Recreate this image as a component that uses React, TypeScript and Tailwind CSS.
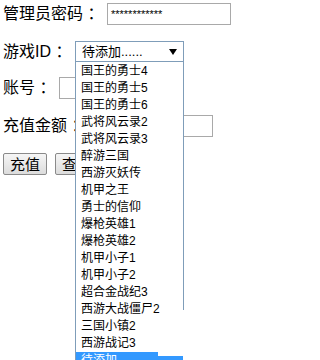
import React from "react";

const games = [
  "国王的勇士4",
  "国王的勇士5",
  "国王的勇士6",
  "武将风云录2",
  "武将风云录3",
  "醉游三国",
  "西游灭妖传",
  "机甲之王",
  "勇士的信仰",
  "爆枪英雄1",
  "爆枪英雄2",
  "机甲小子1",
  "机甲小子2",
  "超合金战纪3",
  "西游大战僵尸2",
  "三国小镇2",
  "西游战记3",
];

const font = { fontFamily: '"Liberation Sans", "Noto Sans CJK SC", sans-serif' };

const Label: React.FC<{ text: string; className?: string }> = ({ text, className = "" }) => (
  <span className={`shrink-0 whitespace-pre text-base leading-none ${className}`}>{text}</span>
);

const Input: React.FC<{ className?: string; value?: string }> = ({ className = "", value }) => (
  <div className={`shrink-0 h-[22px] border border-[#a9a9a9] bg-white flex items-center pl-[3px] ${className}`}>
    {value && <span className="text-[11px] leading-none text-black">{value}</span>}
  </div>
);

const Button: React.FC<{ label: string }> = ({ label }) => (
  <div className="h-[22px] px-[6px] border border-[#8a8a8a] rounded-[2px] bg-gradient-to-b from-[#f6f6f6] to-[#dcdcdc] flex items-center text-[15px] leading-none text-black">
    {label}
  </div>
);

export default function App() {
  return (
    <div className="relative w-[278px] h-[360px] overflow-hidden bg-white text-black" style={font}>
      <div className="pl-[3px]">
        <div className="mt-[3px] h-[22px] flex items-center">
          <Label text="管理员密码 ：" className="w-[104px]" />
          <Input className="w-[124px]" value="************" />
        </div>

        <div className="mt-[16px] h-[21px] flex items-center">
          <Label text="游戏ID ：" className="w-[72px]" />
          <div className="relative shrink-0 w-[109px] h-[21px] border border-[#7f9db9] bg-white flex items-center justify-between pl-[6px] pr-[6px]">
            <span className="text-[13px] leading-none">待添加......</span>
            <svg width="8" height="6" viewBox="0 0 8 6">
              <path d="M0 0H8L4 6Z" fill="#000" />
            </svg>
            <div className="absolute left-[-1px] top-[20px] w-[109px] h-[300px] bg-white border-l border-[#7f9db9]">
              <div className="absolute right-0 top-0 h-[248px] border-r border-[#7f9db9]" />
              <div className="pt-[1px]">
                {games.map((g) => (
                  <div key={g} className="h-[17px] pl-[5px] text-[12px] leading-[17px] whitespace-nowrap">
                    {g}
                  </div>
                ))}
                <div className="relative h-[17px] w-[82px] bg-[#3399ff] pl-[5px] text-[12px] leading-[17px] text-white whitespace-nowrap">
                  待添加......
                  <div className="absolute left-[82px] top-[4px] w-[25px] h-[13px] bg-[#3399ff]" />
                </div>
              </div>
            </div>
          </div>
        </div>

        <div className="mt-[15px] h-[22px] flex items-center">
          <Label text="账号 ：" className="w-[56px]" />
          <Input className="w-[123px]" />
        </div>

        <div className="mt-[16px] h-[22px] flex items-center">
          <Label text="充值金额 ：" className="w-[84px]" />
          <Input className="w-[126px]" />
        </div>

        <div className="mt-[16px] flex items-center gap-[8px]">
          <Button label="充值" />
          <Button label="查询" />
        </div>
      </div>
    </div>
  );
}
